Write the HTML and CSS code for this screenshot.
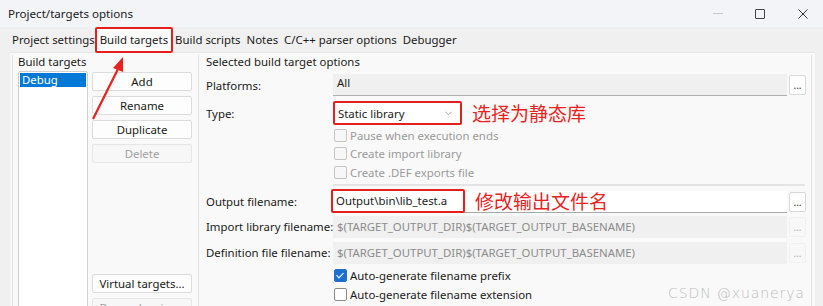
FILE: index.html
```html
<!DOCTYPE html>
<html lang="en">
<head>
  <meta charset="UTF-8">
  <title>Project/targets options</title>
  <link rel="stylesheet" href="styles.css">
</head>
<body>
  <div class="window">
    <div class="titlebar">
      <span class="title">Project/targets options</span>
      <div class="controls">
        <span class="ctl-min"></span>
        <span class="ctl-max"></span>
        <svg class="ctl-close" viewBox="0 0 10 10" width="10" height="10">
          <path d="M0.5 0.5L9.5 9.5M9.5 0.5L0.5 9.5" stroke="#333" stroke-width="1"/>
        </svg>
      </div>
    </div>

    <div class="tabs">
      <span class="tab">Project settings</span>
      <span class="tab tab-active">Build targets</span>
      <span class="tab">Build scripts</span>
      <span class="tab">Notes</span>
      <span class="tab">C/C++ parser options</span>
      <span class="tab">Debugger</span>
    </div>

    <div class="page">
      <div class="group group-targets">
        <div class="group-title">Build targets</div>
        <div class="targets-body">
          <div class="target-list">
            <div class="target-item selected">Debug</div>
          </div>
          <div class="target-buttons">
            <button class="btn">Add</button>
            <button class="btn">Rename</button>
            <button class="btn">Duplicate</button>
            <button class="btn" disabled>Delete</button>
            <div class="spacer"></div>
            <button class="btn">Virtual targets...</button>
            <button class="btn" disabled>Dependencies...</button>
          </div>
        </div>
      </div>

      <div class="group group-options">
        <div class="group-title">Selected build target options</div>

        <div class="row">
          <label class="row-label">Platforms:</label>
          <div class="field field-readonly">All</div>
          <button class="dots">...</button>
        </div>

        <div class="row row-type">
          <label class="row-label">Type:</label>
          <div class="combo">
            <span>Static library</span>
            <svg class="chevron" viewBox="0 0 8 5" width="7" height="5">
              <path d="M0.5 0.5L4 4L7.5 0.5" fill="none" stroke="#999" stroke-width="1"/>
            </svg>
          </div>
          <span class="note">选择为静态库</span>
        </div>

        <div class="checks">
          <div class="check disabled"><span class="box"></span>Pause when execution ends</div>
          <div class="check disabled"><span class="box"></span>Create import library</div>
          <div class="check disabled"><span class="box"></span>Create .DEF exports file</div>
        </div>

        <div class="divider"></div>

        <div class="row row-output">
          <label class="row-label">Output filename:</label>
          <div class="field field-edit">
            <span class="hl">Output\bin\lib_test.a</span>
            <span class="note">修改输出文件名</span>
          </div>
          <button class="dots">...</button>
        </div>

        <div class="row">
          <label class="row-label">Import library filename:</label>
          <div class="field field-disabled">$(TARGET_OUTPUT_DIR)$(TARGET_OUTPUT_BASENAME)</div>
          <button class="dots dots-disabled">...</button>
        </div>

        <div class="row row-def">
          <label class="row-label">Definition file filename:</label>
          <div class="field field-disabled">$(TARGET_OUTPUT_DIR)$(TARGET_OUTPUT_BASENAME)</div>
          <button class="dots dots-disabled">...</button>
        </div>

        <div class="checks checks-bottom">
          <div class="check"><span class="box checked"></span>Auto-generate filename prefix</div>
          <div class="check"><span class="box"></span>Auto-generate filename extension</div>
        </div>
      </div>
    </div>

    <!-- annotation arrow over the dialog -->
    <svg class="arrow" viewBox="0 0 60 80" width="60" height="80">
      <path d="M7 66L33 14" stroke="#e8231d" stroke-width="2.2" fill="none"/>
      <path d="M37 4L27 15L37 19Z" fill="#e8231d"/>
    </svg>

    <div class="watermark">CSDN @xuanerya</div>
  </div>
</body>
</html>
```

FILE: styles.css
```css
body {
  margin: 0;
  font-family: "Noto Sans", "Open Sans", sans-serif;
  font-size: 11.4px;
  color: #1a1a1a;
  background: #f3f3f3;
}
.window {
  position: relative;
  width: 823px;
  height: 306px;
  overflow: hidden;
  background: #f0f0f0;
  white-space: nowrap;
}
.titlebar {
  height: 27px;
  display: flex;
  align-items: center;
  justify-content: space-between;
  padding-left: 8px;
  background: #f3f4f8;
}
.title {
  font-size: 11.6px;
}
.controls {
  display: flex;
  align-items: center;
  height: 100%;
}
.ctl-min {
  width: 10px;
  height: 1px;
  background: #c8c8c8;
  margin-right: 32px;
}
.ctl-max {
  width: 8px;
  height: 8px;
  border: 1px solid #444;
  border-radius: 1px;
  margin-right: 33px;
}
.ctl-close {
  margin-right: 15px;
}
.tabs {
  height: 25px;
  display: flex;
  align-items: center;
  padding-left: 9px;
}
.tab {
  padding: 0 3px;
  line-height: 18px;
}
.tab-active {
  background: #fbfbfb;
  border: 2px solid #e3201b;
  border-radius: 2px;
  padding: 2px 3px;
  margin: 0 -1px 0 -3px;
}
.page {
  display: flex;
  margin-left: 10px;
  width: 805px;
  height: 254px;
  border-top: 1px solid #e6e6e6;
  background: #f9f9f9;
  padding: 2px 0 0 2px;
  box-sizing: border-box;
}
.group {
  border-left: 1px solid #e2e2e2;
}
.group-title {
  line-height: 14px;
  height: 14px;
}
.group-targets {
  width: 185px;
  padding-left: 5px;
  box-sizing: border-box;
}
.targets-body {
  display: flex;
  margin-top: 2px;
  gap: 4px;
}
.target-list {
  width: 70px;
  height: 240px;
  background: #fff;
  border: 1px solid #cfcfcf;
  border-radius: 2px;
  box-sizing: border-box;
  padding: 1px;
}
.target-item {
  line-height: 14px;
  padding-left: 2px;
}
.target-item.selected {
  background: #0078d7;
  color: #fff;
}
.target-buttons {
  width: 100px;
  display: flex;
  flex-direction: column;
  padding-top: 1px;
  gap: 5px;
}
.spacer {
  height: 101px;
}
.btn {
  height: 19px;
  padding: 0;
  font: inherit;
  color: #1a1a1a;
  background: #fdfdfd;
  border: 1px solid #dcdcdc;
  border-radius: 2px;
}
.btn:disabled {
  color: #a0a0a0;
  background: #f7f7f7;
  border-color: #e6e6e6;
}
.group-options {
  flex: 1;
  padding-left: 7px;
  margin-left: 1px;
  margin-right: 3px;
  border-right: 1px solid #e2e2e2;
}
.row {
  display: flex;
  align-items: center;
  height: 22px;
  margin-top: 3px;
}
.group-title + .row {
  margin-top: 5px;
}
.row-label {
  width: 127px;
  flex: none;
}
.field {
  width: 454px;
  height: 22px;
  box-sizing: border-box;
  padding-left: 4px;
  line-height: 20px;
  display: flex;
  align-items: center;
}
.field-readonly {
  background: #f0f0f0;
  border-bottom: 1px solid #b0b0b0;
  padding-bottom: 4px;
}
.field-edit {
  background: #fff;
  border-bottom: 1px solid #a8a8a8;
  padding-left: 0;
}
.field-disabled {
  background: #f0f0f0;
  color: #8c8c8c;
}
.dots {
  width: 17px;
  height: 20px;
  margin-left: 2px;
  padding: 0;
  font: inherit;
  font-size: 10px;
  line-height: 12px;
  color: #333;
  background: #fff;
  border: 1px solid #d8d8d8;
  border-radius: 2px;
}
.dots-disabled {
  color: #b0b0b0;
  background: #f8f8f8;
  border-color: #f0f0f0;
}
.row-type {
  height: 24px;
  margin-top: 5px;
}
.combo {
  width: 129px;
  height: 24px;
  box-sizing: border-box;
  border: 2px solid #e3201b;
  border-radius: 2px;
  background: #fff;
  display: flex;
  align-items: center;
  justify-content: space-between;
  padding: 0 8px 0 3px;
}
.note {
  font-family: "Noto Sans CJK SC", sans-serif;
  font-size: 19px;
  color: #e8231d;
  margin-left: 10px;
  line-height: 22px;
}
.hl {
  height: 24px;
  box-sizing: border-box;
  border: 2px solid #e3201b;
  border-radius: 2px;
  padding: 0 0 0 3px;
  width: 134px;
  margin-left: -2px;
  line-height: 20px;
}
.checks {
  padding-left: 127px;
  margin-top: 1px;
}
.check {
  display: flex;
  align-items: center;
  height: 18.5px;
}
.check.disabled {
  color: #9a9a9a;
}
.box {
  width: 11px;
  height: 11px;
  border: 1px solid #c4c4c4;
  background: #f7f7f7;
  border-radius: 2px;
  margin-right: 3px;
  margin-left: 1px;
}
.check:not(.disabled) .box {
  border-color: #8a8a8a;
  background: #fff;
}
.check .box.checked {
  background: #1e6fd0;
  border-color: #1e6fd0;
  position: relative;
}
.box.checked::after {
  content: "";
  position: absolute;
  left: 3px;
  top: 1px;
  width: 3px;
  height: 6px;
  border: solid #fff;
  border-width: 0 1.5px 1.5px 0;
  transform: rotate(45deg);
}
.divider {
  margin: 2px 0 0 127px;
  width: 472px;
  height: 2px;
  background: #e4e4e4;
}
.row-output {
  margin-top: 5px;
}
.row-def {
  margin-top: 4px;
}
.checks-bottom {
  margin-top: 3px;
}
.arrow {
  position: absolute;
  left: 86px;
  top: 53px;
}
.watermark {
  position: absolute;
  left: 668px;
  top: 285px;
  font-family: "DejaVu Sans", sans-serif;
  font-size: 14px;
  font-weight: 300;
  color: #bdbdbd;
  letter-spacing: 0.9px;
}
```
